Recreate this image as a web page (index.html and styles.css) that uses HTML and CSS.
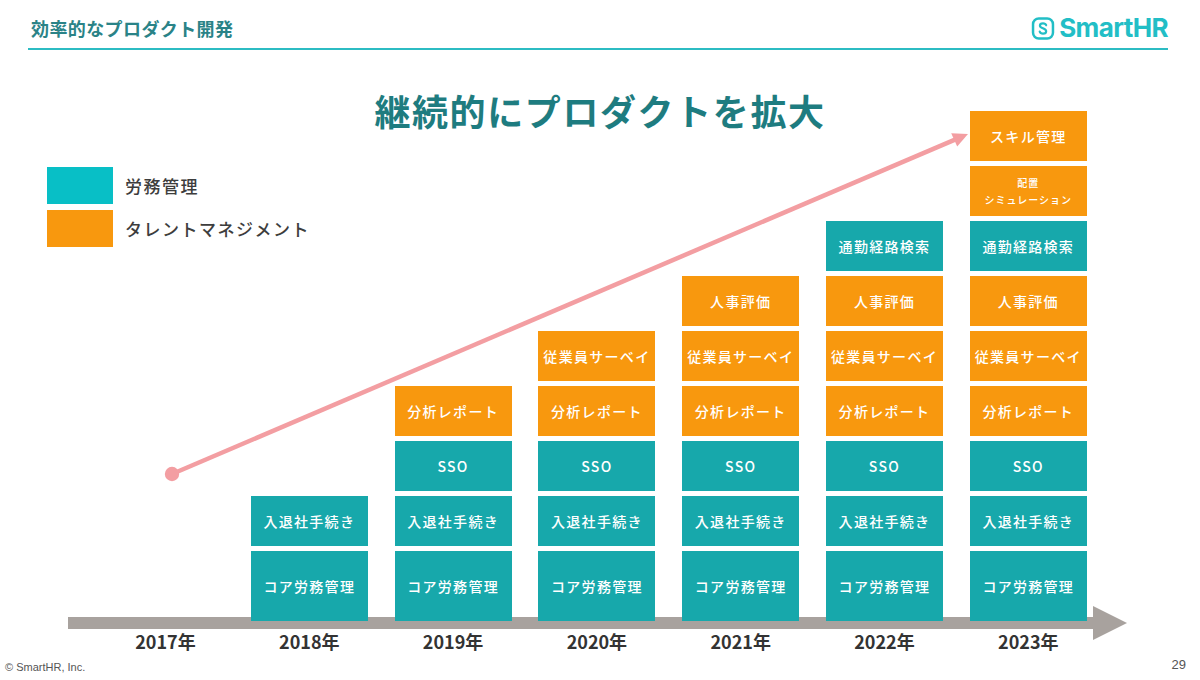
FILE: index.html
```html
<!DOCTYPE html>
<html lang="ja">
<head>
<meta charset="utf-8">
<title>継続的にプロダクトを拡大</title>
<link rel="stylesheet" href="styles.css">
</head>
<body>
<header class="header">
  <div class="section-title">効率的なプロダクト開発</div>
  <div class="logo">
    <svg class="logo-mark" viewBox="0 0 24 24" width="24" height="23">
      <rect x="1.6" y="1.6" width="20.8" height="20.8" rx="6" fill="none" stroke="#22bec6" stroke-width="2.6"/>
      <path d="M15.3 8.6 C14.8 7.2 13.5 6.6 12 6.6 C10.1 6.6 8.8 7.7 8.8 9.1 C8.8 12.1 15.3 11.3 15.3 14.8 C15.3 16.4 13.8 17.4 12 17.4 C10.3 17.4 9.1 16.7 8.6 15.3" fill="none" stroke="#22bec6" stroke-width="2.3" stroke-linecap="round"/>
    </svg>
    <span class="logo-text">SmartHR</span>
  </div>
</header>

<main class="main">
  <h1 class="title">継続的にプロダクトを拡大</h1>

  <div class="legend">
    <div class="legend-row"><span class="swatch swatch-teal"></span><span class="legend-label">労務管理</span></div>
    <div class="legend-row"><span class="swatch swatch-orange"></span><span class="legend-label">タレントマネジメント</span></div>
  </div>

  <div class="chart">
    <div class="cols">
      <div class="col"></div>
      <div class="col">
        <div class="box teal">入退社手続き</div>
        <div class="box teal core">コア労務管理</div>
      </div>
      <div class="col">
        <div class="box orange">分析レポート</div>
        <div class="box teal">SSO</div>
        <div class="box teal">入退社手続き</div>
        <div class="box teal core">コア労務管理</div>
      </div>
      <div class="col">
        <div class="box orange">従業員サーベイ</div>
        <div class="box orange">分析レポート</div>
        <div class="box teal">SSO</div>
        <div class="box teal">入退社手続き</div>
        <div class="box teal core">コア労務管理</div>
      </div>
      <div class="col">
        <div class="box orange">人事評価</div>
        <div class="box orange">従業員サーベイ</div>
        <div class="box orange">分析レポート</div>
        <div class="box teal">SSO</div>
        <div class="box teal">入退社手続き</div>
        <div class="box teal core">コア労務管理</div>
      </div>
      <div class="col">
        <div class="box teal">通勤経路検索</div>
        <div class="box orange">人事評価</div>
        <div class="box orange">従業員サーベイ</div>
        <div class="box orange">分析レポート</div>
        <div class="box teal">SSO</div>
        <div class="box teal">入退社手続き</div>
        <div class="box teal core">コア労務管理</div>
      </div>
      <div class="col">
        <div class="box orange">スキル管理</div>
        <div class="box orange small"><span>配置</span><span>シミュレーション</span></div>
        <div class="box teal">通勤経路検索</div>
        <div class="box orange">人事評価</div>
        <div class="box orange">従業員サーベイ</div>
        <div class="box orange">分析レポート</div>
        <div class="box teal">SSO</div>
        <div class="box teal">入退社手続き</div>
        <div class="box teal core">コア労務管理</div>
      </div>
    </div>
    <div class="axis">
      <div class="axis-line"></div>
      <div class="axis-head"></div>
    </div>
    <div class="years">
      <div class="year">2017年</div>
      <div class="year">2018年</div>
      <div class="year">2019年</div>
      <div class="year">2020年</div>
      <div class="year">2021年</div>
      <div class="year">2022年</div>
      <div class="year">2023年</div>
    </div>
  </div>
</main>

<footer class="footer">
  <span class="copyright">© SmartHR, Inc.</span>
  <span class="page-num">29</span>
</footer>

<svg class="growth" viewBox="0 0 1200 680" width="1200" height="680">
  <line x1="172" y1="474" x2="955" y2="139.6" stroke="#f39ea2" stroke-width="4.5"/>
  <polygon points="968,134 957.2,146.5 951.2,133.3" fill="#f39ea2"/>
  <circle cx="172" cy="474" r="7.2" fill="#f39ea2"/>
</svg>
</body>
</html>
```

FILE: styles.css
```css
* {
  box-sizing: border-box;
}

html, body {
  margin: 0;
  padding: 0;
}

body {
  width: 1200px;
  height: 680px;
  overflow: hidden;
  background: #ffffff;
  font-family: "Noto Sans CJK JP", "Noto Sans", sans-serif;
  display: flex;
  flex-direction: column;
  position: relative;
}

.header {
  margin: 0 32px 0 28px;
  height: 50px;
  display: flex;
  justify-content: space-between;
  align-items: center;
  border-bottom: 2px solid #2cbcc3;
  padding-top: 8px;
}

.section-title {
  padding-left: 3px;
  font-size: 18px;
  font-weight: 700;
  letter-spacing: 0.4px;
  color: #2a8387;
  line-height: 24px;
}

.logo {
  display: flex;
  align-items: center;
}

.logo-mark {
  display: block;
}

.logo-text {
  margin-left: 4px;
  font-family: "Inter", "Liberation Sans", sans-serif;
  font-weight: 700;
  font-size: 26px;
  letter-spacing: -0.6px;
  line-height: 30px;
  color: #22bec6;
}

.main {
  flex: 1;
  display: grid;
  grid-template-columns: 1fr;
  grid-template-rows: 1fr;
}

.main > * {
  grid-area: 1 / 1;
}

.title {
  margin: 40px 0 0 0;
  align-self: start;
  justify-self: center;
  font-size: 36px;
  line-height: 40px;
  font-weight: 700;
  letter-spacing: 1.6px;
  color: #1e7c80;
}

.legend {
  align-self: start;
  justify-self: start;
  margin: 117px 0 0 47px;
  display: flex;
  flex-direction: column;
  gap: 6px;
}

.legend-row {
  display: flex;
  align-items: center;
  gap: 12px;
}

.swatch {
  width: 66px;
  height: 37px;
}

.swatch-teal {
  background: #08bfc6;
}

.swatch-orange {
  background: #f8980e;
}

.legend-label {
  font-size: 17px;
  font-weight: 500;
  letter-spacing: 1.5px;
  color: #3d3d3d;
}

.chart {
  align-self: start;
  margin-top: 61px;
  display: flex;
  flex-direction: column;
}

.cols {
  z-index: 1;
  height: 510px;
  display: flex;
  align-items: flex-end;
  gap: 26.8px;
  padding-left: 107px;
}

.col {
  width: 117px;
  display: flex;
  flex-direction: column;
  gap: 5px;
}

.box {
  height: 50px;
  display: flex;
  flex-direction: column;
  align-items: center;
  justify-content: center;
  color: #ffffff;
  font-size: 14px;
  font-weight: 500;
  letter-spacing: 1.3px;
}

.box.core {
  height: 70px;
}

.box.small {
  font-size: 10px;
  line-height: 17px;
  letter-spacing: 1px;
}

.teal {
  background: #17a8ab;
}

.orange {
  background: #f8980e;
}

.axis {
  margin-top: -4px;
  padding-left: 68px;
  display: flex;
  align-items: center;
}

.axis-line {
  width: 1025px;
  height: 12px;
  background: #a8a29e;
}

.axis-head {
  width: 0;
  height: 0;
  margin: -11px 0;
  border-left: 34px solid #a8a29e;
  border-top: 17px solid transparent;
  border-bottom: 17px solid transparent;
}

.years {
  margin-top: 1px;
  display: flex;
  gap: 26.8px;
  padding-left: 107px;
}

.year {
  width: 117px;
  text-align: center;
  font-size: 18px;
  line-height: 22px;
  font-weight: 700;
  color: #333333;
}

.footer {
  height: 20px;
  display: flex;
  justify-content: space-between;
  align-items: flex-start;
  padding: 0 14px 0 5px;
  font-family: "Liberation Sans", "Noto Sans", sans-serif;
  color: #555555;
}

.copyright {
  font-size: 11px;
  line-height: 14px;
}

.page-num {
  font-size: 13px;
  line-height: 14px;
  margin-top: -2px;
}

.growth {
  position: absolute;
  left: 0;
  top: 0;
  pointer-events: none;
}
```
